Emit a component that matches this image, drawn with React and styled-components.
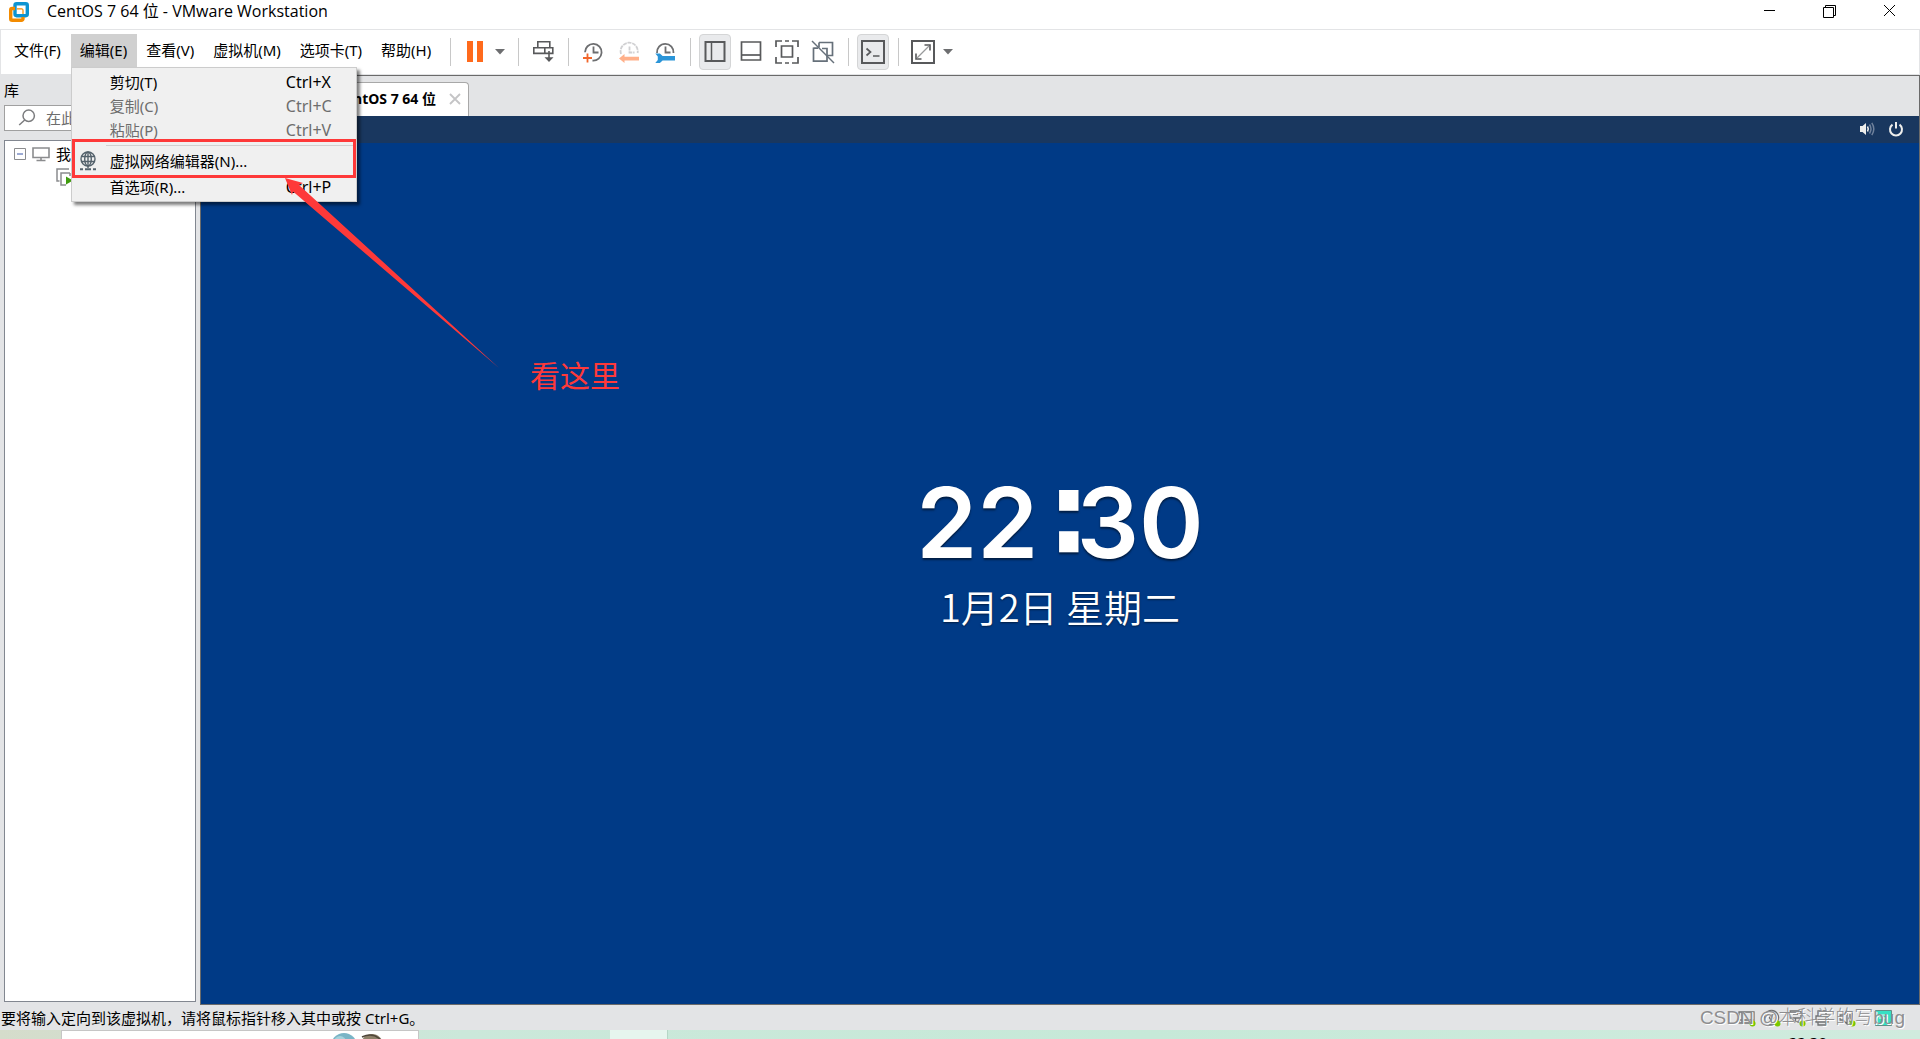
import React, { useState } from "react";
import styled, { createGlobalStyle } from "styled-components";

const ui = `"Noto Sans", "Noto Sans CJK SC", sans-serif`;

const GlobalStyle = createGlobalStyle`
  * {
    box-sizing: border-box;
  }
  body {
    margin: 0;
    overflow: hidden;
    background: #e3e4e6;
    color: #000;
    font-family: ${ui};
    font-size: 15px;
    line-height: 24px;
  }
  button, input {
    font: inherit;
    color: inherit;
  }
  svg {
    display: block;
    flex: none;
  }
`;

const Window = styled.div`
  position: relative;
  display: flex;
  flex-direction: column;
  height: 100vh;
`;

/* title bar */
const TitleBar = styled.header`
  display: flex;
  height: 29px;
  padding-left: 9px;
  background: #fff;
  svg {
    margin-top: 2px;
  }
`;
const Title = styled.h1`
  flex: 1;
  margin: 0 0 0 18px;
  font-family: "Open Sans", "Noto Sans CJK SC", sans-serif;
  font-size: 16px;
  line-height: 22px;
  font-weight: 400;
`;
const WindowButton = styled.button`
  display: flex;
  justify-content: center;
  width: 60px;
  height: 22px;
  padding: 2px 0 0;
  border: 0;
  background: none;
`;

/* menu bar and tool bar */
const MenuBar = styled.div`
  display: flex;
  align-items: flex-start;
  height: 46px;
  padding: 4px 0 0 4px;
  background: #fff;
  border: 1px solid #e3e4e6;
`;
const Menus = styled.nav`
  display: flex;
`;
const MenuHolder = styled.div`
  position: relative;
`;
const MenuButton = styled.button`
  height: 33px;
  padding: 0 10px 2px 9px;
  border: 0;
  white-space: nowrap;
  background: ${(p) => (p.$open ? "#d0d0d0" : "none")};
`;
const Tools = styled.div`
  display: flex;
  gap: 4px;
`;
const Split = styled.div`
  width: 1px;
  height: 28px;
  margin: 4px 8px 0 9px;
  background: #c8c8c8;
`;
const ToolButton = styled.button`
  display: flex;
  align-items: center;
  justify-content: center;
  width: ${(p) => (p.$narrow ? 18 : 32)}px;
  height: 36px;
  padding: 0;
  border: 1px solid ${(p) => (p.$on ? "#d4d5d6" : "transparent")};
  border-radius: 4px;
  background: ${(p) => (p.$on ? "#e9eaec" : "none")};
`;

/* edit menu */
const Dropdown = styled.div`
  position: absolute;
  z-index: 2;
  top: 33px;
  left: 0;
  width: 286px;
  padding: 2px 0 0;
  background: #f0f0f0;
  border: 1px solid #ccc;
  box-shadow: 3px 3px 3px rgba(0, 0, 0, 0.5);
`;
const MenuItem = styled.button`
  display: grid;
  grid-template-columns: 30px 1fr 70px;
  align-items: center;
  width: 100%;
  height: ${(p) => (p.$tall ? 26 : 24)}px;
  padding: 0 0 2px 8px;
  border: 0;
  background: none;
  text-align: left;
  &:disabled {
    color: #6d6d6d;
  }
`;
const Shortcut = styled.span`
  font-size: 16px;
`;
const MenuRule = styled.hr`
  height: 1px;
  margin: 3px 3px 3px 34px;
  border: 0;
  background: #d0d0d0;
`;
const Highlight = styled.div`
  position: absolute;
  top: 71px;
  left: 0;
  right: 0;
  height: 39px;
  border: 3px solid #fe3939;
`;

/* body */
const Body = styled.div`
  display: flex;
  flex: 1;
  min-height: 0;
`;
const Library = styled.aside`
  display: flex;
  flex-direction: column;
  width: 200px;
  padding: 2px 4px 3px;
`;
const LibraryTitle = styled.h2`
  margin: 0;
  padding-bottom: 1px;
  font-size: 15px;
  line-height: 27px;
  font-weight: 400;
`;
const Search = styled.label`
  display: flex;
  align-items: center;
  height: 26px;
  padding-left: 13px;
  background: #fff;
  border: 1px solid #a0a0a0;
  input {
    flex: 1;
    min-width: 0;
    margin-left: 10px;
    padding: 0;
    border: 0;
    outline: 0;
    background: none;
  }
  input::placeholder {
    color: #6d6d6d;
    opacity: 1;
  }
`;
const Tree = styled.ul`
  flex: 1;
  margin: 9px 0 0;
  padding: 1px 0 0 9px;
  list-style: none;
  background: #fff;
  border: 1px solid #828790;
  overflow: hidden;
`;
const TreeRow = styled.li`
  display: flex;
  align-items: center;
  height: 23px;
  padding-left: ${(p) => p.$indent || 0}px;
  white-space: nowrap;
  svg {
    margin-right: 5px;
  }
`;
const Workspace = styled.main`
  display: flex;
  flex: 1;
  flex-direction: column;
  border: 1px solid #6a6a6a;
`;
const Tabs = styled.div`
  display: flex;
  align-items: flex-end;
  height: 40px;
  background: #e3e4e6;
`;
const Tab = styled.div`
  display: flex;
  align-items: center;
  justify-content: flex-end;
  width: ${(p) => (p.$current ? 169 : 99)}px;
  height: 34px;
  padding: 0 7px 2px 0;
  border: 1px solid #a8a8a8;
  border-bottom: 0;
  border-radius: 0 4px 0 0;
  background: ${(p) => (p.$current ? "#fff" : "#ececec")};
  font-size: 14px;
  font-weight: ${(p) => (p.$current ? 700 : 400)};
  white-space: nowrap;
`;
const TabClose = styled.button`
  display: flex;
  margin-left: 13px;
  padding: 0;
  border: 0;
  background: none;
`;

/* guest screen */
const Screen = styled.section`
  display: flex;
  flex: 1;
  flex-direction: column;
  background: #003a86;
  color: #fff;
`;
const GuestBar = styled.div`
  display: flex;
  align-items: center;
  justify-content: flex-end;
  gap: 13px;
  height: 27px;
  padding: 0 15px 2px 0;
  background: #19375f;
`;
const Curtain = styled.div`
  display: flex;
  flex: 1;
  flex-direction: column;
  align-items: center;
  justify-content: center;
  padding-bottom: 54px;
`;
const Clock = styled.time`
  display: flex;
  align-items: center;
  font-family: Inter, sans-serif;
  font-size: 98px;
  line-height: 118px;
  font-weight: 600;
  text-shadow: 0 2px 2px rgba(0, 0, 0, 0.5);
`;
const Colon = styled.span`
  margin: 0 -8px 0 14px;
  font-family: "DejaVu Sans", sans-serif;
  font-size: 110px;
  font-weight: 700;
`;
const DateLine = styled.p`
  margin: 0;
  font-family: "Noto Sans CJK SC", sans-serif;
  font-size: 38px;
  line-height: 48px;
  font-weight: 350;
  text-shadow: 0 1px 2px rgba(0, 0, 0, 0.5);
`;

/* bottom bars */
const StatusBar = styled.footer`
  display: flex;
  align-items: center;
  justify-content: space-between;
  height: 25px;
  padding: 0 27px 0 1px;
`;
const Devices = styled.div`
  display: flex;
  align-items: center;
  gap: 7px;
`;
const Taskbar = styled.div`
  display: flex;
  justify-content: space-between;
  height: 9px;
  padding-left: 61px;
  overflow: hidden;
  background: linear-gradient(90deg, #d5dccb, #cbe8da 24%, #c6e9d8 60%, #d0ebde);
`;
const TaskSearch = styled.div`
  width: 358px;
  padding: 2px 0 0 268px;
  background: #fff;
  border: 1px solid #c6c6c6;
  border-bottom: 0;
`;
const TaskWindow = styled.div`
  width: 58px;
  margin: 0 auto 0 191px;
  background: #e6f5ee;
  border-right: 1px solid #b5d6c6;
`;
const TrayClock = styled.time`
  padding: 2px 93px 0 0;
  font-size: 15px;
  line-height: 20px;
`;

/* notes drawn over the window */
const Arrow = styled.svg`
  position: absolute;
  z-index: 3;
  top: 178px;
  left: 285px;
`;
const Note = styled.div`
  position: absolute;
  z-index: 3;
  top: 354px;
  left: 530px;
  color: #fe3939;
  font-size: 30px;
  line-height: 44px;
`;
const Watermark = styled.div`
  position: absolute;
  z-index: 3;
  right: 15px;
  bottom: 8px;
  color: #8e8e90;
  font-family: "Liberation Sans", "Noto Sans CJK SC", sans-serif;
  font-size: 19px;
  font-weight: 300;
  line-height: 26px;
  text-shadow: 1px 1px 0 #fff;
`;

const Icon = ({ w = 24, h = 24, children, ...rest }) => (
  <svg width={w} height={h} viewBox={`0 0 ${w} ${h}`} fill="none" stroke="#58595b" strokeWidth="2" {...rest}>
    {children}
  </svg>
);

const Logo = () => (
  <Icon w={20} h={20} strokeWidth="3.4">
    <rect x="6" y="1.7" width="12.3" height="12" rx="1.6" stroke="#0d94d2" />
    <path d="M6 6.5H3.2a1.5 1.5 0 0 0-1.5 1.5v8.8a1.5 1.5 0 0 0 1.5 1.5h9.3a1.5 1.5 0 0 0 1.5-1.5V15" stroke="#f38b00" />
    <path d="M8 6.8h4.5A1.4 1.4 0 0 1 14 8.2V12" stroke="#f38b00" strokeWidth="1.2" />
  </Icon>
);

const Caret = () => (
  <Icon w={10} h={6} stroke="none">
    <path d="M0 0h10L5 5.5z" fill="#6d6e70" />
  </Icon>
);

const Pause = () => (
  <Icon w={18} h={22} stroke="none">
    <path d="M1 0h6v21H1zM11 0h6v21h-6z" fill="#ff6a1c" />
  </Icon>
);

const SendKeys = () => (
  <Icon strokeWidth="1.6">
    <path d="M6.8 1.8h12v6h-12zM2.8 7.8h11v5.6h-11zM13.8 13.4V7.8h8v5.6h-4M7 13.4h11" />
    <path d="M18 11v9" />
    <path d="M13.5 17.2h9L18 22z" fill="#58595b" stroke="none" />
  </Icon>
);

const SnapshotTake = () => (
  <Icon stroke="#6d6e70">
    <path d="M4 12.2a8.3 8.3 0 1 1 7.5 8.3M12.5 6.5v6h5" strokeWidth="1.8" />
    <path d="M6.5 13.5v9M2 18h9" stroke="#f2662b" strokeWidth="1.8" />
  </Icon>
);

const SnapshotRevert = () => (
  <Icon stroke="#d0d0d2">
    <path d="M4 14a8.6 8.6 0 1 1 16.6-1M12.5 6.5v6h5" strokeWidth="1.8" strokeDasharray="4 .8" />
    <path d="M2 18.5 7.5 14v2.8H22v3.6H7.5V23z" fill="#ffb08a" stroke="none" />
  </Icon>
);

const SnapshotManage = () => (
  <Icon stroke="#6d6e70">
    <path d="M4 13a8.3 8.3 0 1 1 16.5 0M12.5 6.5v6h5" strokeWidth="1.8" />
    <path
      d="M2.3 13.5h4.6L9.6 16H22v4.4H9.6L6.9 23H2.3L4.8 20v-3.4z"
      fill="#2b95d8"
      stroke="none"
    />
  </Icon>
);

const LibraryPane = () => (
  <Icon>
    <path d="M2.5 2h19v19h-19z" />
    <path d="M8.5 3v18" strokeWidth="1.5" />
  </Icon>
);

const ThumbPane = () => (
  <Icon>
    <path d="M2.5 2h19v18h-19z" strokeWidth="1.7" />
    <path d="M3 15h18" strokeWidth="1.7" />
  </Icon>
);

const FullScreen = () => (
  <Icon strokeWidth="1.7">
    <path d="M6.5 6h11v11h-11zM1 7V1h6M10 1h4M17 1h6v6M23 17v6h-6M14 23h-4M7 23H1v-6" />
  </Icon>
);

const Unity = () => (
  <Icon stroke="#66707a" strokeWidth="1.7">
    <path d="M8 2.5h13.5v13h-5.5M8 2.5v5M2.5 7.5v13.7H16V8.5h-5M2.5 8.2H7" />
    <path d="M1 1l22 22" strokeWidth="1.5" />
  </Icon>
);

const Console = () => (
  <Icon>
    <path d="M1 1h22v22H1z" />
    <path d="M5.5 8.5l4 3.5-4 3.5M12 16h6.5" strokeWidth="1.7" />
  </Icon>
);

const Stretch = () => (
  <Icon strokeWidth="1.6">
    <path d="M1 1h22v22H1z" strokeWidth="2" />
    <path d="M13.5 5H19v5.5M5 13.5V19h5.5" />
    <path d="M18 6 6 18" stroke="#98999b" strokeWidth="1.3" />
  </Icon>
);

const Globe = () => (
  <Icon w={16} h={20} stroke="#54626c" strokeWidth="1.4">
    <circle cx="8" cy="8" r="7" />
    <ellipse cx="8" cy="8" rx="3.3" ry="7" />
    <path d="M1.5 5.5h13M1.5 10.5h13M8 1v16" />
    <path d="M0 18.3h3M5 18.3h6M13 18.3h3" strokeWidth="2" />
  </Icon>
);

const Magnifier = () => (
  <Icon w={18} h={18} stroke="#7b7c7e" strokeWidth="1.5">
    <circle cx="10.7" cy="6.7" r="5.7" />
    <path d="M6.7 11 1.2 16" />
  </Icon>
);

const green = "#7ac800";

const DeviceIcon = ({ d, live = true }) => (
  <Icon w={18} h={18} strokeWidth="1.3" stroke="#707173">
    <path d={d} />
    {live && <circle cx="14.5" cy="14.5" r="3" fill={green} stroke="none" />}
  </Icon>
);

const devices = [
  ["硬盘", "M1 3h15v11H1zM4 3v11M1 11h15"],
  ["光盘", "M8.5 1.5a7 7 0 1 0 .1 0M8.5 6.5a2 2 0 1 0 .1 0"],
  ["网络适配器", "M2 2h11v7H2zM7.5 9v4M3 13h10M5 5h5"],
  ["打印机", "M3 7h12v6H3zM5 7V2h8v5M5 13v3h8v-3"],
  ["声卡", "M2 6h3l4-4v13l-4-4H2zM12 5v8M14.5 3v9"],
];

const tools = [
  [["发送 Ctrl+Alt+Del", SendKeys]],
  [
    ["拍摄快照", SnapshotTake],
    ["恢复快照", SnapshotRevert],
    ["管理快照", SnapshotManage],
  ],
  [
    ["显示库", LibraryPane, true],
    ["显示缩略图栏", ThumbPane],
    ["全屏", FullScreen],
    ["Unity", Unity],
  ],
  [["控制台视图", Console, true]],
];

const menus = ["文件(F)", "编辑(E)", "查看(V)", "虚拟机(M)", "选项卡(T)", "帮助(H)"];

function EditMenu() {
  return (
    <Dropdown>
      <MenuItem>
        <span />
        <span>剪切(T)</span>
        <Shortcut>Ctrl+X</Shortcut>
      </MenuItem>
      <MenuItem disabled>
        <span />
        <span>复制(C)</span>
        <Shortcut>Ctrl+C</Shortcut>
      </MenuItem>
      <MenuItem disabled>
        <span />
        <span>粘贴(P)</span>
        <Shortcut>Ctrl+V</Shortcut>
      </MenuItem>
      <MenuRule />
      <MenuItem $tall>
        <Globe />
        <span>虚拟网络编辑器(N)...</span>
      </MenuItem>
      <MenuItem $tall>
        <span />
        <span>首选项(R)...</span>
        <Shortcut>Ctrl+P</Shortcut>
      </MenuItem>
      <Highlight />
    </Dropdown>
  );
}

export default function App() {
  const [open, setOpen] = useState("编辑(E)");

  return (
    <Window>
      <GlobalStyle />
      <TitleBar>
        <Logo />
        <Title>CentOS 7 64 位 - VMware Workstation</Title>
        <WindowButton aria-label="最小化">
          <Icon w={14} h={14} stroke="#000" strokeWidth="1">
            <path d="M1 6.5h11" />
          </Icon>
        </WindowButton>
        <WindowButton aria-label="还原">
          <Icon w={14} h={14} stroke="#000" strokeWidth="1">
            <path d="M.5 3.5h10v10H.5zM2.5 3.5v-2h10v10h-2" />
          </Icon>
        </WindowButton>
        <WindowButton aria-label="关闭">
          <Icon w={14} h={14} stroke="#000" strokeWidth="1">
            <path d="M1 1l11 11M12 1 1 12" />
          </Icon>
        </WindowButton>
      </TitleBar>

      <MenuBar>
        <Menus>
          {menus.map((name) => (
            <MenuHolder key={name}>
              <MenuButton $open={open === name} onClick={() => setOpen(open === name ? "" : name)}>
                {name}
              </MenuButton>
              {name === "编辑(E)" && open === name && <EditMenu />}
            </MenuHolder>
          ))}
        </Menus>
        <Split />
        <ToolButton aria-label="挂起">
          <Pause />
        </ToolButton>
        <ToolButton $narrow aria-label="电源选项">
          <Caret />
        </ToolButton>
        <Split />
        {tools.map((group, i) => (
          <React.Fragment key={i}>
            <Tools>
              {group.map(([label, Glyph, on]) => (
                <ToolButton key={label} aria-label={label} $on={on}>
                  <Glyph />
                </ToolButton>
              ))}
            </Tools>
            <Split />
          </React.Fragment>
        ))}
        <ToolButton aria-label="拉伸">
          <Stretch />
        </ToolButton>
        <ToolButton $narrow aria-label="拉伸选项">
          <Caret />
        </ToolButton>
      </MenuBar>

      <Body>
        <Library>
          <LibraryTitle>库</LibraryTitle>
          <Search>
            <Magnifier />
            <input type="text" aria-label="搜索" placeholder="在此处键入内容进行搜索" />
          </Search>
          <Tree>
            <TreeRow>
              <Icon w={12} h={12} stroke="#8b8c8e" strokeWidth="1">
                <path d="M.5.5h11v11H.5z" />
                <path d="M3 6h6" stroke="#3a56a8" />
              </Icon>
              <Icon w={20} h={16} stroke="#8b8c8e" strokeWidth="1.6">
                <path d="M2 2h16v9.5H2zM10 11.5v3M5.5 14.5h9" />
              </Icon>
              我的计算机
            </TreeRow>
            <TreeRow $indent={42}>
              <Icon w={18} h={18} stroke="#8b8c8e" strokeWidth="1.5">
                <path d="M3.5 13H1V1h12M14 5H5v12h5M14 5v3" />
                <path d="M10 8.5v8l7-4z" fill="#3f9c0e" stroke="none" />
              </Icon>
              CentOS 7 64 位
            </TreeRow>
          </Tree>
        </Library>

        <Workspace>
          <Tabs>
            <Tab>主页</Tab>
            <Tab $current>
              CentOS 7 64 位
              <TabClose aria-label="关闭选项卡">
                <Icon w={12} h={12} stroke="#c4c4c6" strokeWidth="1.8">
                  <path d="M1 1l10 10M11 1 1 11" />
                </Icon>
              </TabClose>
            </Tab>
          </Tabs>
          <Screen>
            <GuestBar>
              <Icon w={16} h={16} stroke="#eeeeec" strokeWidth="1.5">
                <path d="M1 5h2.5L7 2v12l-3.5-3H1z" fill="#eeeeec" stroke="none" />
                <path d="M8.5 5.5q1.5 2.5 0 5" />
                <path d="M10.5 3.5q3 4.5 0 9M12.8 1.8q4 6.2 0 12.4" stroke="#70829c" />
              </Icon>
              <Icon w={16} h={16} stroke="#eeeeec">
                <path d="M4.5 3.6a6 6 0 1 0 7 0M8 1v6.5" />
              </Icon>
            </GuestBar>
            <Curtain>
              <Clock>
                22<Colon>∶</Colon>30
              </Clock>
              <DateLine>1月2日 星期二</DateLine>
            </Curtain>
          </Screen>
        </Workspace>
      </Body>

      <StatusBar>
        <span>要将输入定向到该虚拟机，请将鼠标指针移入其中或按 Ctrl+G。</span>
        <Devices>
          {devices.map(([name, d]) => (
            <DeviceIcon key={name} d={d} live={name !== "打印机"} />
          ))}
          <Icon w={30} h={18}>
            <path d="M12.5 1.5h16v15h-16z" fill="#36dfc4" stroke="#5f8f88" strokeWidth="1" />
            <path d="M16 6h9M16 9h9" stroke="#eafffb" strokeWidth="1" />
          </Icon>
        </Devices>
      </StatusBar>

      <Taskbar>
        <TaskSearch>
          <Icon w={60} h={24} stroke="none">
            <circle cx="14" cy="13" r="13" fill="#79b4c6" />
            <circle cx="10" cy="9" r="6" fill="#a5d2dc" />
            <circle cx="42" cy="12" r="11" fill="#8d8069" />
            <path d="M32 4q10-5 18 2" stroke="#4f463a" strokeWidth="1.5" />
          </Icon>
        </TaskSearch>
        <TaskWindow />
        <TrayClock>22:30</TrayClock>
      </Taskbar>

      <Arrow width="214" height="190" viewBox="0 0 214 190">
        <path d="M0 0 18 5l-4 2L214 190 8 13.5l-1 3.5z" fill="#fe3939" />
      </Arrow>
      <Note>看这里</Note>
      <Watermark>CSDN @本科学的写bug</Watermark>
    </Window>
  );
}
